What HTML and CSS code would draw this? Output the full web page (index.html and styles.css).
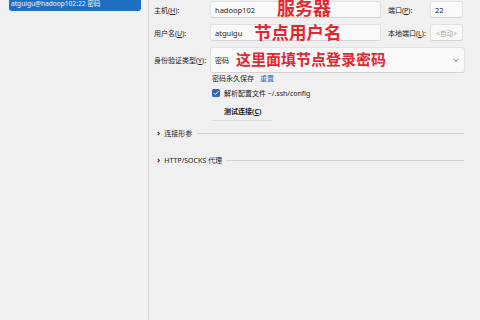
FILE: index.html
```html
<!DOCTYPE html>
<html lang="zh">
<head>
<meta charset="utf-8">
<link rel="stylesheet" href="styles.css">
</head>
<body>
<div class="app">
  <aside class="sidebar">
    <div class="session">atguigu@hadoop102:22 密码</div>
  </aside>
  <main class="main">
    <div class="form">
      <div class="label r1">主机(<u>H</u>):</div>
      <div class="field r1 host">hadoop102</div>
      <div class="label2 r1">端口(<u>P</u>):</div>
      <div class="field r1 small">22</div>

      <div class="label r2">用户名(<u>U</u>):</div>
      <div class="field r2 host">atguigu</div>
      <div class="label2 r2">本地端口(<u>L</u>):</div>
      <div class="field r2 small muted">&lt;自动&gt;</div>

      <div class="label r3">身份验证类型(<u>Y</u>):</div>
      <div class="field r3 select">
        <span>密码</span>
        <svg class="chev" width="8" height="6" viewBox="0 0 8 6"><path d="M1.5 1.8 L4 4.2 L6.5 1.8" fill="none" stroke="#666" stroke-width="0.9"/></svg>
      </div>
    </div>

    <div class="extra">
      <div class="line save">密码永久保存 <a class="link">重置</a></div>
      <div class="line check">
        <span class="box"><svg width="8" height="8" viewBox="0 0 8 8"><path d="M1.8 4.1 L3.3 5.6 L6.3 2.4" fill="none" stroke="#fff" stroke-width="1"/></svg></span>
        解析配置文件 ~/.ssh/config
      </div>
      <div class="btn">测试连接(<u>C</u>)</div>
    </div>

    <div class="section s1"><span class="arrow">›</span><span class="stitle">连接形参</span><span class="rule"></span></div>
    <div class="section s2"><span class="arrow">›</span><span class="stitle">HTTP/SOCKS 代理</span><span class="rule"></span></div>

    <div class="note n1">服务器</div>
    <div class="note n2">节点用户名</div>
    <div class="note n3">这里面填节点登录密码</div>
  </main>
</div>
</body>
</html>
```
FILE: styles.css
```css
html, body {
  margin: 0;
  padding: 0;
  background: #f0f0f0;
  width: 480px;
  height: 320px;
  overflow: hidden;
  font-family: "Noto Sans", "Noto Sans CJK SC", sans-serif;
  font-size: 7.5px;
  color: #1b1b1b;
}
u { text-decoration: underline; }

.app {
  display: flex;
  height: 320px;
}

.sidebar {
  width: 149px;
  flex: none;
  border-right: 1.5px solid #d6d6d6;
  box-sizing: border-box;
  padding-left: 9px;
}

.session {
  width: 132px;
  height: 11px;
  background: #1f6fc0;
  color: #f4f8fc;
  border-radius: 0 0 3px 3px;
  padding-left: 2px;
  box-sizing: border-box;
  line-height: 8px;
  font-size: 6.6px;
  white-space: nowrap;
}

.main {
  position: relative;
  flex: 1;
  padding-left: 5px;
  padding-top: 1px;
}

.form {
  display: grid;
  grid-template-columns: 56px 171px 7px 42px 33px;
  grid-template-rows: 17px 17px 26px;
  row-gap: 6px;
  align-items: center;
}

.label { grid-column: 1; font-size: 7px; color: #222; white-space: nowrap; }
.label2 { grid-column: 4; font-size: 7px; color: #222; white-space: nowrap; }
.r1 { grid-row: 1; }
.r2 { grid-row: 2; }
.r3 { grid-row: 3; }

.field {
  height: 100%;
  box-sizing: border-box;
  background: #f9f9f9;
  border: 1px solid #e2e2e2;
  border-bottom-color: #d4d4d4;
  border-radius: 3px;
  display: flex;
  align-items: center;
  padding-left: 4px;
  white-space: nowrap;
}
.host { grid-column: 2; }
.small { grid-column: 5; }
.muted { color: #a5a5a5; font-size: 6.5px; justify-content: center; padding-left: 0; }
.select {
  grid-column: 2 / 6;
  margin-right: -2px;
  justify-content: space-between;
  padding-right: 4px;
  font-size: 7px;
}
.chev { display: block; }

.extra {
  padding-left: 58px;
  margin-top: -2px;
  font-size: 7px;
}
.line { height: 14px; display: flex; align-items: center; white-space: nowrap; }
.link { color: #2a6dc4; margin-left: 6px; }
.check { margin-top: 1px; }
.box {
  width: 8px;
  height: 8px;
  background: #2f69b5;
  border-radius: 1.5px;
  margin-right: 4px;
  display: flex;
}
.btn {
  width: 60px;
  height: 19px;
  margin-top: 2px;
  box-sizing: border-box;
  border-bottom: 1px solid #dcdcdc;
  display: flex;
  align-items: center;
  padding-left: 12px;
  font-weight: bold;
  font-size: 7px;
  white-space: nowrap;
}

.section {
  display: flex;
  align-items: center;
  height: 12px;
  padding-left: 3px;
  width: 307px;
  font-size: 7px;
  white-space: nowrap;
}
.s1 { margin-top: 6px; }
.s2 { margin-top: 15px; }
.arrow { font-weight: bold; font-size: 9px; margin-right: 4px; line-height: 8px; color: #333; }
.rule { flex: 1; height: 1px; background: #d4d4d4; margin-left: 5px; }

.note {
  position: absolute;
  color: #e3262f;
  font-family: "Noto Sans CJK SC", sans-serif;
  font-weight: bold;
  white-space: nowrap;
  line-height: 1;
}
.n1 { left: 128px; top: -2px; font-size: 18px; }
.n2 { left: 105px; top: 23px; font-size: 17.5px; }
.n3 { left: 87px; top: 51px; font-size: 15px; }
```
